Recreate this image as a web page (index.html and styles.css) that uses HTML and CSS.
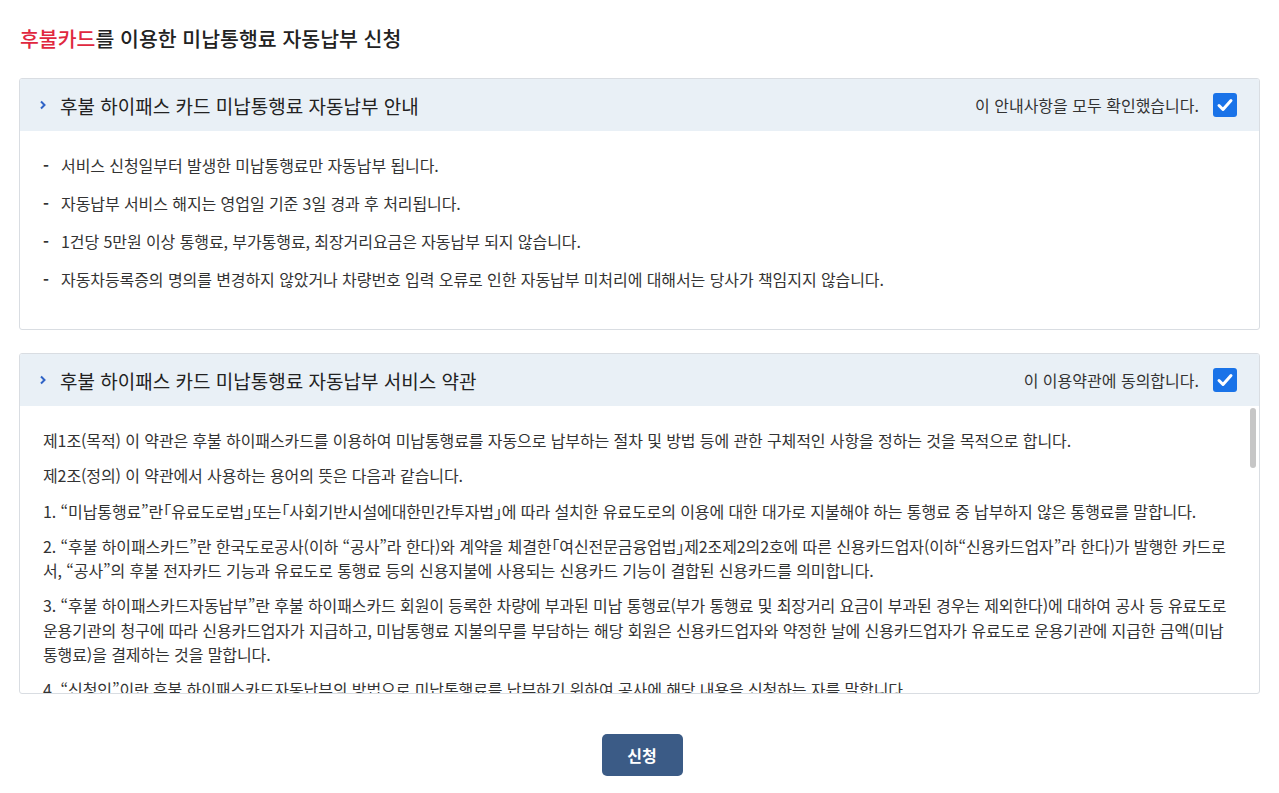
FILE: index.html
```html
<!DOCTYPE html>
<html lang="ko">
<head>
<meta charset="utf-8">
<title>후불카드 미납통행료 자동납부 신청</title>
<link rel="stylesheet" href="styles.css">
</head>
<body>
<div class="page">
  <h1 class="title"><span class="accent">후불카드</span>를 이용한 미납통행료 자동납부 신청</h1>

  <section class="panel">
    <div class="panel-head">
      <h2 class="panel-title"><svg class="chev" width="8" height="10" viewBox="0 0 8 10"><path d="M2 1.5 L5.5 5 L2 8.5" fill="none" stroke="#2f63c6" stroke-width="2"/></svg>후불 하이패스 카드 미납통행료 자동납부 안내</h2>
      <label class="agree">이 안내사항을 모두 확인했습니다.<span class="check"><svg width="24" height="24" viewBox="0 0 24 24"><rect x="0" y="0" width="24" height="24" rx="3" fill="#1a73e8"/><path d="M6 12.5 L10 16.5 L18 7.5" fill="none" stroke="#fff" stroke-width="3" stroke-linecap="round" stroke-linejoin="round"/></svg></span></label>
    </div>
    <ul class="notice">
      <li>서비스 신청일부터 발생한 미납통행료만 자동납부 됩니다.</li>
      <li>자동납부 서비스 해지는 영업일 기준 3일 경과 후 처리됩니다.</li>
      <li>1건당 5만원 이상 통행료, 부가통행료, 최장거리요금은 자동납부 되지 않습니다.</li>
      <li>자동차등록증의 명의를 변경하지 않았거나 차량번호 입력 오류로 인한 자동납부 미처리에 대해서는 당사가 책임지지 않습니다.</li>
    </ul>
  </section>

  <section class="panel">
    <div class="panel-head">
      <h2 class="panel-title"><svg class="chev" width="8" height="10" viewBox="0 0 8 10"><path d="M2 1.5 L5.5 5 L2 8.5" fill="none" stroke="#2f63c6" stroke-width="2"/></svg>후불 하이패스 카드 미납통행료 자동납부 서비스 약관</h2>
      <label class="agree">이 이용약관에 동의합니다.<span class="check"><svg width="24" height="24" viewBox="0 0 24 24"><rect x="0" y="0" width="24" height="24" rx="3" fill="#1a73e8"/><path d="M6 12.5 L10 16.5 L18 7.5" fill="none" stroke="#fff" stroke-width="3" stroke-linecap="round" stroke-linejoin="round"/></svg></span></label>
    </div>
    <div class="terms-wrap">
      <div class="terms">
        <p>제1조(목적) 이 약관은 후불 하이패스카드를 이용하여 미납통행료를 자동으로 납부하는 절차 및 방법 등에 관한 구체적인 사항을 정하는 것을 목적으로 합니다.</p>
        <p>제2조(정의) 이 약관에서 사용하는 용어의 뜻은 다음과 같습니다.</p>
        <p>1. “미납통행료”란「유료도로법」또는「사회기반시설에대한민간투자법」에 따라 설치한 유료도로의 이용에 대한 대가로 지불해야 하는 통행료 중 납부하지 않은 통행료를 말합니다.</p>
        <p>2. “후불 하이패스카드”란 한국도로공사(이하 “공사”라 한다)와 계약을 체결한「여신전문금융업법」제2조제2의2호에 따른 신용카드업자(이하“신용카드업자”라 한다)가 발행한 카드로서, “공사”의 후불 전자카드 기능과 유료도로 통행료 등의 신용지불에 사용되는 신용카드 기능이 결합된 신용카드를 의미합니다.</p>
        <p>3. “후불 하이패스카드자동납부”란 후불 하이패스카드 회원이 등록한 차량에 부과된 미납 통행료(부가 통행료 및 최장거리 요금이 부과된 경우는 제외한다)에 대하여 공사 등 유료도로 운용기관의 청구에 따라 신용카드업자가 지급하고, 미납통행료 지불의무를 부담하는 해당 회원은 신용카드업자와 약정한 날에 신용카드업자가 유료도로 운용기관에 지급한 금액(미납 통행료)을 결제하는 것을 말합니다.</p>
        <p>4. “신청인”이란 후불 하이패스카드자동납부의 방법으로 미납통행료를 납부하기 위하여 공사에 해당 내용을 신청하는 자를 말합니다.</p>
        <p>5. “회원”이란 후불 하이패스카드자동납부를 신청하여 공사로부터 승인을 받은 자를 말합니다.</p>
        <p>제3조(약관의 효력 및 변경) 이 약관은 후불 하이패스카드자동납부를 신청한 회원에게 적용됩니다.</p>
      </div>
      <div class="thumb"></div>
    </div>
  </section>

  <div class="actions">
    <button class="btn" type="button">신청</button>
  </div>
</div>
</body>
</html>
```

FILE: styles.css
```css
html, body {
  margin: 0;
  padding: 0;
  background: #fff;
}
body {
  font-family: "Noto Sans CJK KR", "Noto Sans", sans-serif;
  color: #333;
}
.page {
  padding: 22px 19px 0 19px;
}
.title {
  margin: 0 0 24px 1px;
  font-size: 20.5px;
  font-weight: 500;
  line-height: 32px;
  color: #222;
}
.accent {
  color: #e0283f;
}
.panel {
  border: 1px solid #d9dde2;
  border-radius: 3px;
  margin-bottom: 23px;
  overflow: hidden;
}
.panel-head {
  display: flex;
  align-items: center;
  justify-content: space-between;
  height: 52px;
  padding: 0 22px 0 19px;
  background: #e9f0f6;
}
.panel-title {
  display: flex;
  align-items: center;
  margin: 0;
  font-size: 19px;
  font-weight: 400;
  color: #222;
}
.chev {
  margin-right: 13px;
}
.agree {
  display: flex;
  align-items: center;
  font-size: 16px;
  color: #333;
}
.check {
  display: inline-flex;
  margin-left: 14px;
}
.notice {
  list-style: none;
  margin: 0;
  padding: 23px 20px 23px 23px;
}
.notice li {
  font-size: 16px;
  line-height: 22px;
  margin-bottom: 16px;
  letter-spacing: -0.08px;
  display: flex;
}
.notice li::before {
  content: "-";
  width: 18px;
  flex: none;
  font-weight: 700;
}
.terms-wrap {
  position: relative;
}
.terms {
  height: 287px;
  overflow: hidden;
  padding: 0 22px 0 23px;
}
.terms p {
  margin: 0;
  padding-top: 11px;
  font-size: 16px;
  line-height: 24.3px;
  letter-spacing: -0.1px;
  font-feature-settings: "halt";
}
.terms p:first-child {
  padding-top: 22px;
}
.thumb {
  position: absolute;
  top: 2px;
  right: 3px;
  width: 6px;
  height: 60px;
  border-radius: 3px;
  background: #c6c6c6;
}
.actions {
  display: flex;
  justify-content: center;
  padding-top: 17px;
  padding-left: 5px;
}
.btn {
  width: 81px;
  height: 42px;
  border: none;
  border-radius: 5px;
  background: #3b5b86;
  color: #fff;
  font-family: inherit;
  font-size: 16px;
  font-weight: 700;
}
```
